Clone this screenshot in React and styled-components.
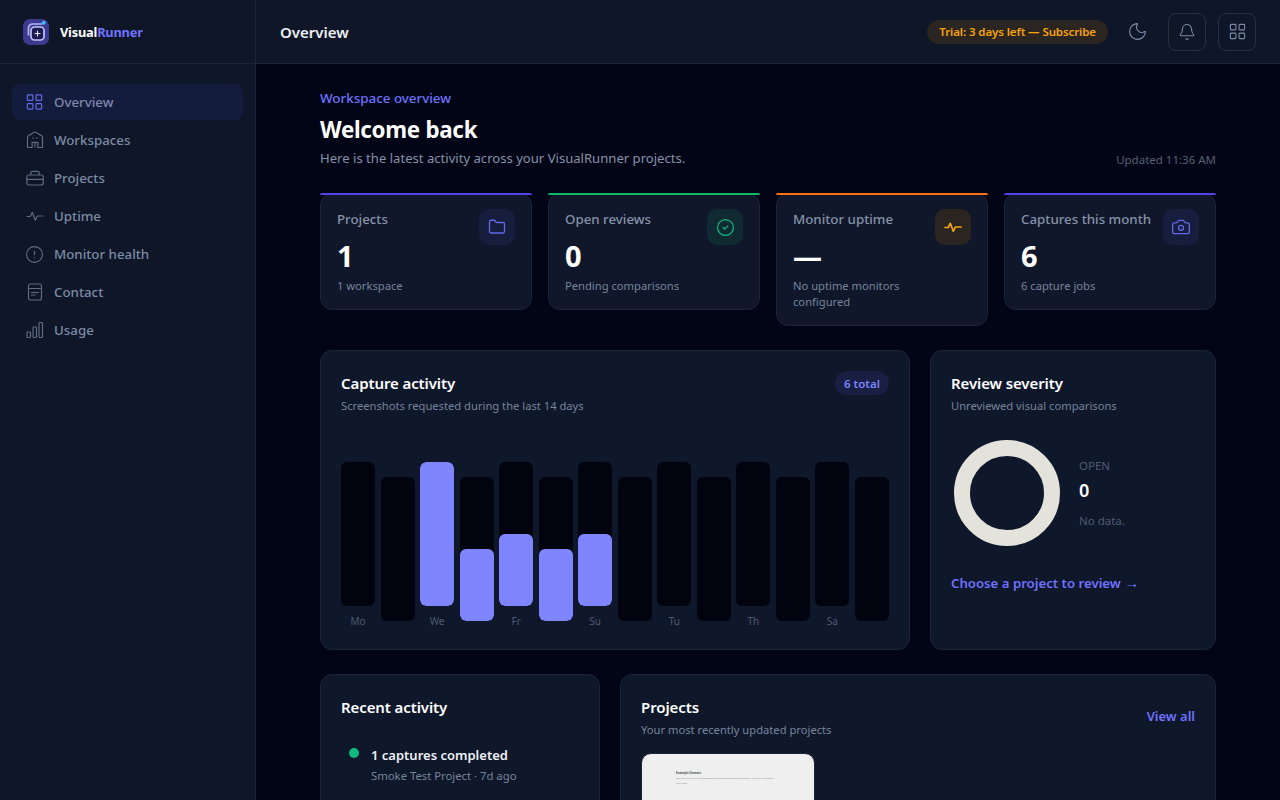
import React from "react";
import styled, { createGlobalStyle } from "styled-components";
import {
  LayoutGrid,
  CircleAlert,
  Moon,
  Bell,
  Folder,
  CircleCheck,
  Camera,
} from "lucide-react";

const Global = createGlobalStyle`
  * { box-sizing: border-box; }
  html, body { margin: 0; height: 100%; overflow: hidden; }
  body {
    background: #020515;
    color: #fff;
    font-family: "Noto Sans", "Open Sans", sans-serif;
  }
`;

const Shell = styled.div`
  display: flex;
  height: 800px;
  overflow: hidden;
`;

const Sidebar = styled.aside`
  width: 256px;
  flex: none;
  background: #0e1628;
  border-right: 1px solid #1c2437;
`;

const Brand = styled.div`
  height: 64px;
  display: flex;
  align-items: center;
  gap: 10px;
  padding-left: 22px;
  border-bottom: 1px solid #1c2437;
  font-size: 12.8px;
  font-weight: 700;
  letter-spacing: -0.2px;
  span { color: #6e72ff; }
`;

const Nav = styled.nav`
  display: flex;
  flex-direction: column;
  gap: 2px;
  padding: 20px 12px;
`;

const NavItem = styled.a`
  height: 36px;
  display: flex;
  align-items: center;
  gap: 10px;
  padding-left: 13px;
  border-radius: 8px;
  font-size: 13.3px;
  font-weight: 500;
  color: ${(p) => (p.$active ? "#7e87a8" : "#7c8ba5")};
  background: ${(p) => (p.$active ? "#141c3d" : "transparent")};
`;

const NavIcon = styled.span`
  width: 19px;
  flex: none;
  display: flex;
  justify-content: center;
  color: ${(p) => (p.$active ? "#6468e8" : "#5f6b80")};
`;

const Main = styled.div`
  flex: 1;
  min-width: 0;
`;

const Topbar = styled.header`
  height: 64px;
  display: flex;
  align-items: center;
  padding: 0 24px;
  background: #0e1628;
  border-bottom: 1px solid #1c2437;
`;

const PageTitle = styled.div`
  font-size: 15px;
  font-weight: 600;
  color: #eef0f5;
  margin-right: auto;
`;

const Trial = styled.div`
  height: 24px;
  padding: 0 12px;
  display: flex;
  align-items: center;
  border-radius: 12px;
  background: #2a2521;
  color: #f8a30c;
  font-size: 11.5px;
  font-weight: 600;
  letter-spacing: -0.1px;
`;

const Plain = styled.div`
  width: 38px;
  height: 38px;
  margin-left: 10px;
  display: flex;
  align-items: center;
  justify-content: center;
  color: #7c8ba5;
`;

const IconBtn = styled(Plain)`
  margin-left: 12px;
  border: 1px solid #28303f;
  border-radius: 8px;
`;

const Content = styled.main`
  padding: 25px 64px;
`;

const Eyebrow = styled.div`
  font-size: 13.4px;
  font-weight: 500;
  line-height: 18px;
  color: #6e72ff;
`;

const Welcome = styled.h1`
  margin: 7px 0 3px;
  font-size: 22.4px;
  line-height: 32px;
  font-weight: 700;
  letter-spacing: -0.3px;
`;

const HeadRow = styled.div`
  display: flex;
  justify-content: space-between;
  align-items: flex-end;
  margin-bottom: 26px;
`;

const Lead = styled.div`
  font-size: 13.1px;
  line-height: 18px;
  color: #8592a8;
`;

const Updated = styled.div`
  font-size: 11.5px;
  line-height: 16px;
  margin-bottom: -1px;
  color: #566176;
`;

const Stats = styled.div`
  display: grid;
  grid-template-columns: repeat(4, 1fr);
  gap: 16px;
  align-items: start;
  margin-bottom: 24px;
`;

const StatCard = styled.div`
  position: relative;
  padding: 16px 16px 15px;
  background: #10172a;
  border: 1px solid #1c2437;
  border-radius: 12px;

  &::before {
    content: "";
    position: absolute;
    left: -1px;
    right: -1px;
    top: -1px;
    height: 2px;
    border-radius: 2px 2px 0 0;
    background: ${(p) => p.$accent};
  }
`;

const StatTop = styled.div`
  display: flex;
  justify-content: space-between;
  height: 36px;
`;

const StatLabel = styled.div`
  font-size: 13.3px;
  font-weight: 500;
  line-height: 18px;
  color: #8592a8;
`;

const StatIcon = styled.div`
  width: 36px;
  height: 36px;
  margin-top: -1px;
  flex: none;
  display: flex;
  align-items: center;
  justify-content: center;
  border-radius: 10px;
  color: ${(p) => p.$color};
  background: ${(p) => p.$bg};
`;

const StatValue = styled.div`
  font-size: 29px;
  line-height: 36px;
  font-weight: 700;
  margin-top: -8px;
`;

const StatNote = styled.div`
  margin-top: 4px;
  max-width: 140px;
  font-size: 11.2px;
  line-height: 16px;
  color: #76849c;
`;

const MidRow = styled.div`
  display: grid;
  grid-template-columns: 590px 286px;
  gap: 20px;
  margin-bottom: 24px;
`;

const Panel = styled.section`
  background: #0f172a;
  border: 1px solid #1c2437;
  border-radius: 12px;
  padding: 20px;
`;

const PanelHead = styled.div`
  display: flex;
  justify-content: space-between;
  align-items: ${(p) => p.$align || "flex-start"};
`;

const PanelTitle = styled.h2`
  margin: 0;
  font-size: 15px;
  line-height: 24px;
  font-weight: 600;
  letter-spacing: -0.1px;
  color: #fff;
`;

const PanelSub = styled.div`
  margin-top: 1px;
  font-size: 11.2px;
  line-height: 20px;
  color: #76849c;
`;

const TotalBadge = styled.div`
  height: 24px;
  padding: 0 9px;
  display: flex;
  align-items: center;
  border-radius: 12px;
  background: #181f42;
  color: #7f84ff;
  font-size: 11.5px;
  font-weight: 600;
`;

const Chart = styled.div`
  display: flex;
  justify-content: space-between;
  margin-top: 46px;
  height: 167px;
`;

const BarCol = styled.div`
  position: relative;
  width: 34px;
`;

const BarTrack = styled.div`
  position: relative;
  width: 100%;
  height: 144px;
  margin-top: ${(p) => (p.$low ? "15px" : "0")};
  background: #01040f;
  border-radius: 6px;
  overflow: hidden;
`;

const BarFill = styled.div`
  position: absolute;
  left: 0;
  right: 0;
  bottom: 0;
  background: #7f84ff;
  border-radius: 6px;
`;

const BarLabel = styled.div`
  position: absolute;
  left: -4px;
  right: -4px;
  top: 152px;
  text-align: center;
  font-size: 10px;
  line-height: 14px;
  color: #4f5b72;
`;

const Severity = styled.div`
  display: flex;
  align-items: center;
  gap: 19px;
  margin: 24px 0 25px 3px;
`;

const Donut = styled.div`
  width: 106px;
  height: 106px;
  flex: none;
  border-radius: 50%;
  border: 16px solid #e3e2db;
`;

const SevLabel = styled.div`
  font-size: 11.5px;
  line-height: 16px;
  color: #4f5b72;
`;

const SevValue = styled.div`
  margin: 4px 0 11px;
  font-size: 18px;
  line-height: 24px;
  font-weight: 600;
`;

const ReviewLink = styled.a`
  font-size: 13.2px;
  font-weight: 600;
  line-height: 20px;
  color: #6e72ff;
`;

const Arrow = styled.span`
  font-family: "Liberation Sans", sans-serif;
  font-size: 15px;
  line-height: 1;
`;

const BottomRow = styled.div`
  display: grid;
  grid-template-columns: 280px 596px;
  gap: 20px;
`;

const ActivityItem = styled.div`
  display: flex;
  gap: 12px;
  margin: 26px 0 0 8px;
`;

const Dot = styled.div`
  width: 10px;
  height: 10px;
  margin-top: 3px;
  flex: none;
  border-radius: 50%;
  background: #10b981;
`;

const ActivityTitle = styled.div`
  font-size: 13px;
  line-height: 20px;
  font-weight: 600;
  color: #eef0f5;
`;

const ActivityMeta = styled.div`
  margin-top: 1px;
  font-size: 11.3px;
  line-height: 20px;
  color: #76849c;
`;

const ViewAll = styled.a`
  margin-bottom: 4px;
  font-size: 13px;
  font-weight: 600;
  color: #6e72ff;
`;

const Thumb = styled.div`
  width: 174px;
  height: 130px;
  margin-top: 13px;
  padding: 17px 34px;
  background: #efefef;
  border: 1px solid #1c2437;
  border-radius: 10px 10px 0 0;
`;

const ThumbTitle = styled.div`
  font-size: 3px;
  line-height: 5px;
  font-weight: 700;
  color: #555;
`;

const ThumbText = styled.div`
  font-size: 2px;
  line-height: 5px;
  color: #888;
  white-space: nowrap;
`;

const LogoBox = styled.svg`
  flex: none;
  display: block;
`;

function Logo() {
  return (
    <LogoBox width="28" height="28" viewBox="0 0 28 28" fill="none">
      <rect x="1" y="1" width="26" height="26" rx="7" fill="#3b3a8f" />
      <path d="M6.5 17V10a4 4 0 0 1 4-4h9" stroke="#b6b4f5" strokeWidth="1.7" strokeLinecap="round" />
      <rect x="9" y="9" width="13" height="13" rx="3.5" fill="#1d1c52" stroke="#c3c1f8" strokeWidth="1.7" />
      <path d="M15.5 13v5M13 15.5h5" stroke="#e6e6fb" strokeWidth="1.1" strokeLinecap="round" />
      <circle cx="21.7" cy="4.7" r="2" fill="#38bdf8" />
    </LogoBox>
  );
}

function WorkspacesIcon() {
  return (
    <svg width="18" height="18" viewBox="0 0 18 18" fill="none" stroke="currentColor" strokeWidth="1.2" strokeLinejoin="round">
      <path d="M1.5 16.5V6.2c0-.5.2-.9.6-1.2l5.6-3.6c.8-.5 1.8-.5 2.6 0L15.9 5c.4.3.6.7.6 1.2v10.3h-4.6v-5.2H6.1v5.2H1.5Z" />
      <path d="M9 11.3v5.2" />
      <path d="M7 7h.01M11 7h.01" strokeWidth="1.6" strokeLinecap="round" />
    </svg>
  );
}

function ProjectsIcon() {
  return (
    <svg width="18" height="18" viewBox="0 0 18 18" fill="none" stroke="currentColor" strokeWidth="1.2">
      <rect x="0.8" y="6" width="16.4" height="10" rx="2" />
      <path d="M0.8 10.4h16.4" />
      <path d="M4.8 6V3.8c0-.9.6-1.5 1.5-1.5h5.4c.9 0 1.5.6 1.5 1.5V6" />
    </svg>
  );
}

function PulseIcon({ size = 18, width = 1.2 }) {
  return (
    <svg width={size} height={size} viewBox="0 0 18 18" fill="none" stroke="currentColor" strokeWidth={width} strokeLinecap="round" strokeLinejoin="round">
      <path d="M1 9.5h3.2l2.1-4.2 3 8 2-4.3h5.7" />
    </svg>
  );
}

function ContactIcon() {
  return (
    <svg width="18" height="18" viewBox="0 0 18 18" fill="none" stroke="currentColor" strokeWidth="1.2">
      <rect x="2.5" y="1" width="13" height="16" rx="2" />
      <path d="M2.5 5.5h13M5 9.5h8M5 12h4.5" />
    </svg>
  );
}

function UsageIcon() {
  return (
    <svg width="18" height="18" viewBox="0 0 18 18" fill="none" stroke="currentColor" strokeWidth="1.2">
      <rect x="1" y="11" width="3.5" height="5.5" rx="0.8" />
      <rect x="7" y="6" width="3.5" height="10.5" rx="0.8" />
      <rect x="13" y="1.5" width="3.5" height="15" rx="0.8" />
    </svg>
  );
}

const navItems = [
  { label: "Overview", icon: <LayoutGrid size={20} strokeWidth={1.5} />, active: true },
  { label: "Workspaces", icon: <WorkspacesIcon /> },
  { label: "Projects", icon: <ProjectsIcon /> },
  { label: "Uptime", icon: <PulseIcon /> },
  { label: "Monitor health", icon: <CircleAlert size={19} strokeWidth={1.4} /> },
  { label: "Contact", icon: <ContactIcon /> },
  { label: "Usage", icon: <UsageIcon /> },
];

const stats = [
  { label: "Projects", value: "1", note: "1 workspace", accent: "#4f46e5", color: "#6468e8", bg: "#171e3d", icon: <Folder size={18} strokeWidth={1.7} /> },
  { label: "Open reviews", value: "0", note: "Pending comparisons", accent: "#10b964", color: "#10b981", bg: "#0f2a30", icon: <CircleCheck size={19} strokeWidth={1.6} /> },
  { label: "Monitor uptime", value: "—", note: "No uptime monitors configured", accent: "#f97316", color: "#f5a50b", bg: "#2a2521", icon: <PulseIcon size={18} width={1.7} /> },
  { label: "Captures this month", value: "6", note: "6 capture jobs", accent: "#4f46e5", color: "#6468e8", bg: "#171e3d", icon: <Camera size={20} strokeWidth={1.6} /> },
];

const days = [
  { label: "Mo", fill: 0 },
  { label: "", fill: 0, low: true },
  { label: "We", fill: 144 },
  { label: "", fill: 72, low: true },
  { label: "Fr", fill: 72 },
  { label: "", fill: 72, low: true },
  { label: "Su", fill: 72 },
  { label: "", fill: 0, low: true },
  { label: "Tu", fill: 0 },
  { label: "", fill: 0, low: true },
  { label: "Th", fill: 0 },
  { label: "", fill: 0, low: true },
  { label: "Sa", fill: 0 },
  { label: "", fill: 0, low: true },
];

export default function App() {
  return (
    <Shell>
      <Global />
      <Sidebar>
        <Brand>
          <Logo />
          <div>
            Visual<span>Runner</span>
          </div>
        </Brand>
        <Nav>
          {navItems.map((item) => (
            <NavItem key={item.label} $active={item.active}>
              <NavIcon $active={item.active}>{item.icon}</NavIcon>
              {item.label}
            </NavItem>
          ))}
        </Nav>
      </Sidebar>
      <Main>
        <Topbar>
          <PageTitle>Overview</PageTitle>
          <Trial>Trial: 3 days left — Subscribe</Trial>
          <Plain>
            <Moon size={21} strokeWidth={1.3} />
          </Plain>
          <IconBtn>
            <Bell size={18} strokeWidth={1.4} />
          </IconBtn>
          <IconBtn>
            <LayoutGrid size={19} strokeWidth={1.4} />
          </IconBtn>
        </Topbar>
        <Content>
          <Eyebrow>Workspace overview</Eyebrow>
          <Welcome>Welcome back</Welcome>
          <HeadRow>
            <Lead>Here is the latest activity across your VisualRunner projects.</Lead>
            <Updated>Updated 11:36 AM</Updated>
          </HeadRow>
          <Stats>
            {stats.map((s) => (
              <StatCard key={s.label} $accent={s.accent}>
                <StatTop>
                  <StatLabel>{s.label}</StatLabel>
                  <StatIcon $color={s.color} $bg={s.bg}>
                    {s.icon}
                  </StatIcon>
                </StatTop>
                <StatValue>{s.value}</StatValue>
                <StatNote>{s.note}</StatNote>
              </StatCard>
            ))}
          </Stats>
          <MidRow>
            <Panel>
              <PanelHead>
                <div>
                  <PanelTitle>Capture activity</PanelTitle>
                  <PanelSub>Screenshots requested during the last 14 days</PanelSub>
                </div>
                <TotalBadge>6 total</TotalBadge>
              </PanelHead>
              <Chart>
                {days.map((d, i) => (
                  <BarCol key={i}>
                    <BarTrack $low={d.low}>
                      {d.fill > 0 && <BarFill style={{ height: d.fill }} />}
                    </BarTrack>
                    {d.label && <BarLabel>{d.label}</BarLabel>}
                  </BarCol>
                ))}
              </Chart>
            </Panel>
            <Panel>
              <PanelTitle>Review severity</PanelTitle>
              <PanelSub>Unreviewed visual comparisons</PanelSub>
              <Severity>
                <Donut />
                <div>
                  <SevLabel>OPEN</SevLabel>
                  <SevValue>0</SevValue>
                  <SevLabel>No data.</SevLabel>
                </div>
              </Severity>
              <ReviewLink>
                Choose a project to review <Arrow>→</Arrow>
              </ReviewLink>
            </Panel>
          </MidRow>
          <BottomRow>
            <Panel>
              <PanelTitle>Recent activity</PanelTitle>
              <ActivityItem>
                <Dot />
                <div>
                  <ActivityTitle>1 captures completed</ActivityTitle>
                  <ActivityMeta>Smoke Test Project · 7d ago</ActivityMeta>
                </div>
              </ActivityItem>
            </Panel>
            <Panel>
              <PanelHead $align="center">
                <div>
                  <PanelTitle>Projects</PanelTitle>
                  <PanelSub>Your most recently updated projects</PanelSub>
                </div>
                <ViewAll>View all</ViewAll>
              </PanelHead>
              <Thumb>
                <ThumbTitle>Example Domain</ThumbTitle>
                <ThumbText>This domain is for use in documentation examples without needing permission. Avoid use in operations.</ThumbText>
                <ThumbText>Learn more</ThumbText>
              </Thumb>
            </Panel>
          </BottomRow>
        </Content>
      </Main>
    </Shell>
  );
}
